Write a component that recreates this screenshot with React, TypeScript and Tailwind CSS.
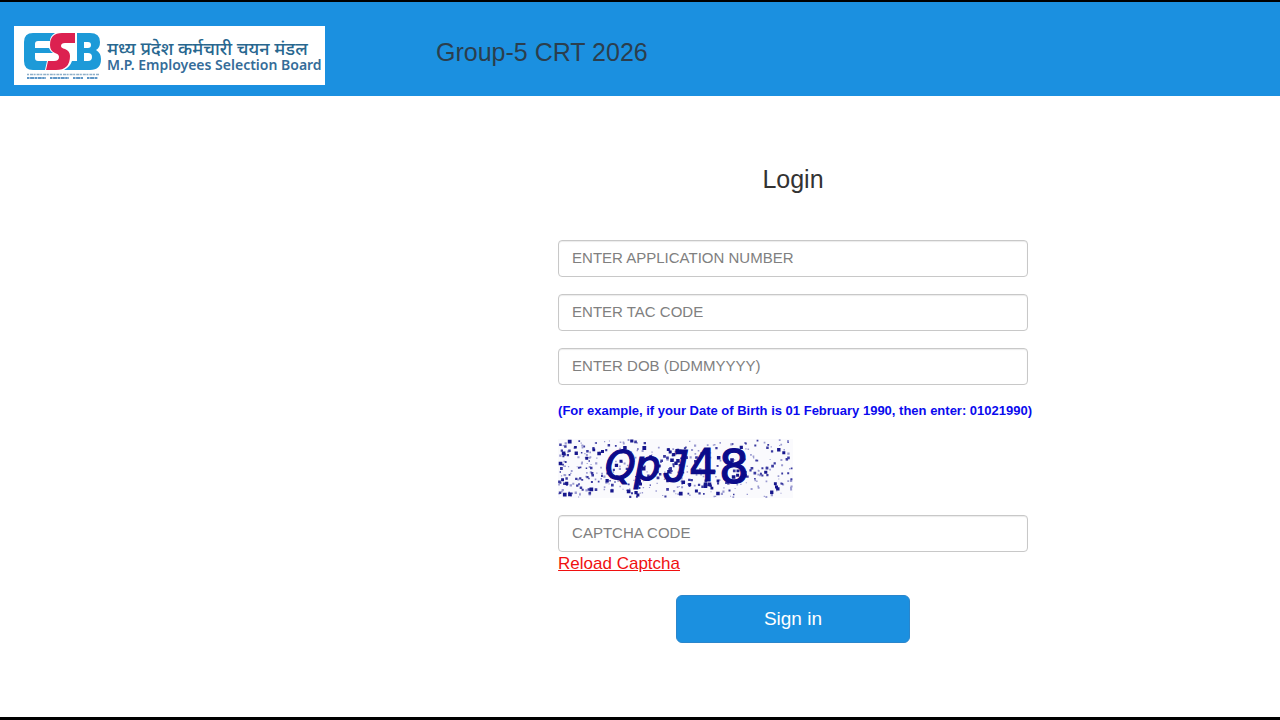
import React from "react";

type FieldProps = { id: string; label: string };

function Field({ id, label }: FieldProps) {
  return (
    <input
      id={id}
      name={id}
      type="text"
      aria-label={label}
      placeholder={label}
      className="block h-[37px] w-full rounded border border-[#c8c8c8] bg-white px-[13px] pb-[3px] text-[15px] text-[#555] shadow-[inset_0_1px_1px_rgba(0,0,0,0.08)] placeholder:text-[#808080]"
    />
  );
}

function EsbMark() {
  return (
    <svg viewBox="0 0 80 51" className="h-[51px] w-20 shrink-0" role="img" aria-label="ESB">
      <path
        d="M11 3H33Q28 6 28 11H16Q13 11 13 14V18H27Q28 21 31 23H13V28Q13 31 16 31H25L23 40H11Q2 40 2 31V12Q2 3 11 3Z"
        fill="#1d9ad8"
      />
      <path
        d="M53 3V13H43Q39 13 39 16Q39 18 43 19Q48 21 48 26Q48 40 34 40H24L26 31H32Q37 31 37 27Q37 24 33 23Q28 21 28 15Q28 3 40 3Z"
        fill="#dc2150"
      />
      <path
        d="M55 3H68Q78 3 78 12Q78 18 74 20Q79 23 79 29Q79 40 68 40H42Q48 37 50 31H55ZM62 12V18H66Q69 18 69 15Q69 12 66 12ZM62 23V31H66Q70 31 70 27Q70 23 66 23Z"
        fillRule="evenodd"
        fill="#1d9ad8"
      />
      <path d="M5 44.5H77" stroke="#5385ad" strokeWidth="1.6" strokeDasharray="2 1 3 .6" opacity=".65" />
      <path d="M5 48H24M28 48H47M51 48H61M65 48H76" stroke="#2873b5" strokeWidth="1.8" strokeDasharray="2.5 .6 4 .5" opacity=".75" />
    </svg>
  );
}

const CAPTCHA_WIDTH = 235;
const CAPTCHA_HEIGHT = 59;

function noise(count: number, seed: number, min: number, max: number): string {
  let state = seed;
  const next = () => {
    state = (state * 16807) % 2147483647;
    return state / 2147483647;
  };
  next();
  next();
  let path = "";
  for (let i = 0; i < count; i++) {
    const size = min + next() * (max - min);
    const x = (next() * (CAPTCHA_WIDTH - size)).toFixed(1);
    const y = (next() * (CAPTCHA_HEIGHT - size)).toFixed(1);
    const s = size.toFixed(1);
    path += `M${x} ${y}h${s}v${s}h-${s}z`;
  }
  return path;
}

const faintSpecks = noise(260, 48271, 1, 2.4);
const darkSpecks = noise(180, 735101, 1.4, 2.8);
const blots = noise(65, 9021733, 2.6, 3.8);

function Captcha() {
  return (
    <svg
      viewBox="0 0 235 59"
      className="mt-[18px] mb-[17px] h-[59px] w-[235px] bg-[#fafafd] font-['DejaVu_Sans',sans-serif]"
      role="img"
      aria-label="Captcha"
    >
      <path d={faintSpecks} fill="#9a9ad0" />
      <path d={darkSpecks} fill="#3a3aa0" />
      <path d={blots} fill="#16168c" />
      <g fill="#0b0b8a" stroke="#0b0b8a" strokeWidth="1.2">
        <text x="47" y="40" fontSize="39" fontStyle="italic">Q</text>
        <text x="76" y="41" fontSize="42" fontStyle="italic">p</text>
        <text x="106" y="43" fontSize="46" fontStyle="italic" className="font-['Liberation_Sans',Arial,sans-serif]">J</text>
        <text x="131" y="42" fontSize="44">4</text>
        <text x="161" y="44" fontSize="47">8</text>
      </g>
    </svg>
  );
}

export default function App() {
  return (
    <div className="flex min-h-screen flex-col border-t-2 border-b-[3px] border-black bg-white font-['Liberation_Sans',Arial,sans-serif] text-[#333]">
      <header className="flex bg-[#1b90e0] px-3.5 pt-6 pb-[11px]">
        <div className="flex h-[59px] w-[311px] shrink-0 items-center gap-[5px] bg-white pl-2">
          <EsbMark />
          <div className="flex flex-col whitespace-nowrap font-['Noto_Sans','Open_Sans',sans-serif]">
            <span className="text-lg leading-[18px] font-medium text-[#28678f]">मध्य प्रदेश कर्मचारी चयन मंडल</span>
            <span className="text-sm leading-4 font-semibold text-[#356c99]">M.P. Employees Selection Board</span>
          </div>
        </div>
        <h1 className="ml-[111px] pt-2.5 text-[25px] leading-8 text-[#2b3e4d]">Group-5 CRT 2026</h1>
      </header>
      <main className="pt-[67px] pr-[19.7%] pl-[43.6%]">
        <form className="flex w-full flex-col items-start" onSubmit={(e) => e.preventDefault()}>
          <h2 className="mb-[45px] self-center text-[25px] leading-8">Login</h2>
          <div className="flex w-full flex-col gap-[17px]">
            <Field id="application-number" label="ENTER APPLICATION NUMBER" />
            <Field id="tac-code" label="ENTER TAC CODE" />
            <Field id="dob" label="ENTER DOB (DDMMYYYY)" />
          </div>
          <p className="mt-4 text-[13px] leading-5 font-bold whitespace-nowrap text-[#0a0aee]">
            (For example, if your Date of Birth is 01 February 1990, then enter: 01021990)
          </p>
          <Captcha />
          <Field id="captcha-code" label="CAPTCHA CODE" />
          <a href="#captcha-code" className="text-[17px] leading-6 text-[#f01010] underline">
            Reload Captcha
          </a>
          <button
            type="submit"
            className="mt-[19px] h-12 w-1/2 self-center rounded-md border border-[#2a86cc] bg-[#1b90e0] text-[19px] text-white"
          >
            Sign in
          </button>
        </form>
      </main>
    </div>
  );
}
